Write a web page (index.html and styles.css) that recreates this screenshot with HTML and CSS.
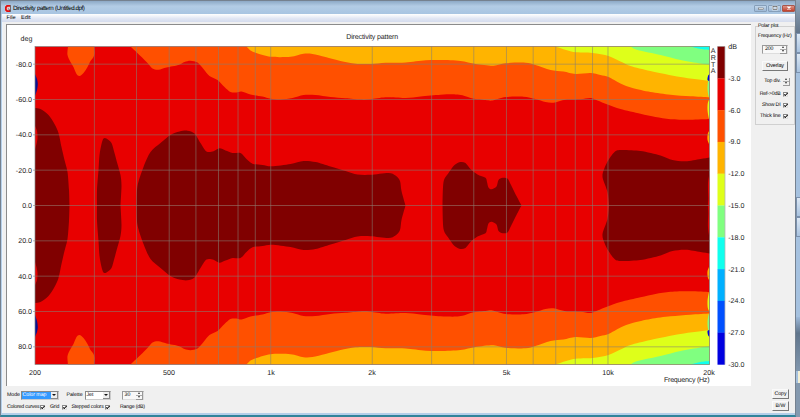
FILE: index.html
```html
<!DOCTYPE html>
<html lang="en">
<head>
    <meta charset="UTF-8">
    <title>Directivity pattern (Untitled.dpf)</title>
    <link rel="stylesheet" href="styles.css">
</head>
<body>

<div class="window">
    <div class="title-bar">
        <svg class="app-icon" viewBox="0 0 7 8">
            <rect width="7" height="8" fill="#e8c8cc"/>
            <path d="M6 0H2L0 2V6L2 8H6V6H3L2 5V3L3 2H6Z" fill="#e01010"/>
            <path d="M6.5 0V8M4 4L6 7" stroke="#333" stroke-width="0.8"/>
        </svg>
        <span class="title">Directivity pattern (Untitled.dpf)</span>
        <div class="window-buttons">
            <div class="win-btn"><svg viewBox="0 0 8 6"><rect x="1.5" y="3" width="5" height="1.6" fill="#fff" stroke="#555" stroke-width="0.5"/></svg></div>
            <div class="win-btn"><svg viewBox="0 0 8 6"><rect x="2" y="1.5" width="4" height="3" fill="none" stroke="#fff" stroke-width="1.6"/><rect x="2" y="1.5" width="4" height="3" fill="none" stroke="#555" stroke-width="0.7"/></svg></div>
            <div class="win-btn close"><svg viewBox="0 0 8 6"><path d="M2.5 1.5L5.5 4.5M5.5 1.5L2.5 4.5" stroke="#fff" stroke-width="1.3"/></svg></div>
        </div>
    </div>

    <div class="menu">
        <span>File</span>
        <span>Edit</span>
    </div>

    <div class="content">
        <div class="chart-panel">
            <svg class="chart" id="chart" viewBox="6.5 25 744 361"></svg>
        </div>

        <!-- Polar plot options -->
        <fieldset class="polar">
            <legend>Polar plot</legend>
            <div class="freq-label">Frequency (Hz)</div>
            <div class="number freq"><span>200</span><i class="spin"></i></div>
            <div class="btn overlay">Overlay</div>
            <div class="row top-div">Top div. <i class="spin"></i></div>
            <div class="row">Ref-&gt;0dB <i class="check"></i></div>
            <div class="row">Show DI <i class="check"></i></div>
            <div class="row">Thick line <i class="check"></i></div>
        </fieldset>
    </div>

    <div class="bottom">
        <div class="options">
            <div class="line">
                <span class="mode-label">Mode</span>
                <div class="select mode"><span>Color map</span><i class="arrow"></i></div>
                <span class="palette-label">Palette</span>
                <div class="select palette"><span>Jet</span><i class="arrow"></i></div>
                <div class="number range"><span>30</span><i class="spin"></i></div>
            </div>
            <div class="line checks">
                <span class="w-curves">Colored curves</span><i class="check"></i>
                <span class="w-grid">Grid</span><i class="check"></i>
                <span class="w-stepped">Stepped colors</span><i class="check"></i>
                <span class="w-range">Range (dB)</span>
            </div>
        </div>
        <div class="actions">
            <div class="btn">Copy</div>
            <div class="btn">B/W</div>
        </div>
    </div>
</div>

<div class="desktop">
    <div class="bg-dark"></div>
    <div class="bg-tabs"><b></b><b></b></div>
    <div class="bg-plain"></div>
    <div class="bg-tabs"><b></b><b></b></div>
    <div class="bg-plain second"></div>
    <div class="bg-low"></div>
    <div class="bg-icon"></div>
    <div class="bg-end"></div>
</div>

<script>
    const L = 34.5, R = 709, T = 46.5, B = 364.5, MID = 205.5;
    const colors = {
        dark: '#800000', red: '#e80000', orange: '#ff5000', amber: '#ffb400', yellow: '#deff1a',
        green: '#80ff80', cyan: '#10ffee', sky: '#00b0ff', blue: '#0050ff', navy: '#0000e0', ink: '#0a1090'
    };

    // Contours of the upper half, the lower half is mirrored
    const regions = [
        ['orange', [67.5,46.5, 67,55, 70,62, 73,67, 76,74, 79,76, 83,73, 87,67, 90,61, 93,57, 94,53, 93.5,46.5]],
        ['orange', [130,46.5, 140,56, 147,63, 152,68.5, 158,69.7, 166,67.5, 178,65, 184,62, 190,60.8, 197,62.5, 203,69, 209,76, 217,80, 224,87, 230,92, 236,92.5, 241,91.5, 250,94.5, 262,96.5, 270,98.7, 280,99.5, 292,98, 303,95, 315,95, 330,97, 345,98.2, 360,99.6, 370,99.3, 385,97.3, 405,98, 420,96.5, 440,94.7, 455,94.4, 462,95.2, 472,98.5, 485,100, 492,100.5, 505,97, 523,96.7, 535,99, 545,102, 553,102.7, 565,99.8, 580,99.3, 590,98, 597,100.5, 607,104.5, 620,109, 640,113.7, 655,117, 670,119.2, 690,119.7, 709,119], 'edge'],
        ['amber', [246,46.5, 250,50.5, 256,53, 270,56.8, 290,56.8, 303,53.8, 312,54, 325,57, 340,61, 355,63.8, 371,64, 385,62.7, 405,62.5, 425,60.3, 440,60, 460,61, 475,64, 493,65.7, 505,63.2, 525,62.7, 535,65, 550,70, 563,71.5, 575,74, 590,73, 600,75, 608,77, 620,83.5, 632,88, 650,92, 670,94.7, 690,96.3, 709,97.5], 'edge'],
        ['yellow', [555,46.5, 573,52, 592,53, 608,56, 620,61.5, 630,66, 650,71, 680,77, 709,81], 'edge'],
        ['green', [630,46.5, 637,50, 660,55, 680,60, 700,63.5, 709,64.7], 'edge'],
        ['cyan', [690,46.5, 700,49, 709,50], 'edge'],
        ['dark', [34.5,108, 40,109, 48,115, 54,124, 58,133, 61,147, 64,160, 67,172, 68.5,190, 69,205.5], 'left'],
        ['dark', [96.5,205.5, 96.5,190, 98,170, 99,155, 101,144, 103,138.5, 106,138.5, 111,143, 114,153, 117,164, 120,175, 121,186, 120,205.5]],
        ['dark', [136,205.5, 137,186, 143,167, 150,152, 160,143, 170,135, 179,131.5, 187,130.7, 194,133.5, 200,143, 206,151.5, 213,151.3, 219,148.3, 225,150.5, 232,153, 240,153, 246,159, 252,163.7, 262,165, 271,166.3, 290,164, 303,161, 315,162, 330,166.5, 345,171, 357,174.5, 370,174.8, 388,173, 395,175.5, 399.5,181, 401,191, 405,205.5]],
        ['dark', [442,205.5, 443,182, 448,173, 454,165, 460,162, 465,163, 470,169, 477,174.5, 485,177.8, 486.5,182, 488,187.5, 491,189.3, 496,186.5, 498,180, 502,177.8, 507,178.5, 510,184, 516,196, 521,205.5]],
        ['dark', [608.5,205.5, 607,192, 602,177, 604,168, 608,160, 614,152, 620,150, 640,151, 660,155.5, 672,160, 685,161.3, 700,159, 709,157.5], 'corner'],
        // thin artefacts along both edges
        ['ink', [34.5,74, 36.5,79, 37.3,84, 36.5,90, 34.5,96]],
        ['red', [34.5,126, 36.5,131, 37,138, 36,144, 34.5,149]],
        ['green', [709,78, 707.5,82, 707,89, 708,96, 709,98]],
        ['navy', [709,74, 707.5,76, 707,80, 709,81]],
        ['yellow', [709,99, 707.3,103, 707,110, 708,117, 709,120]],
        ['amber', [709,130, 707.2,134, 707,140, 709,145]],
        ['red', [709,173, 707.5,184, 707.8,198, 707.5,205.5, 709,205.5]]
    ];

    // Catmull-Rom curve through the points
    function curve(p) {
        const pts = [];
        for (let i = 0; i < p.length; i += 2) pts.push([p[i], p[i + 1]]);
        let d = `M${pts[0]}`;
        for (let i = 0; i < pts.length - 1; i++) {
            const a = pts[Math.max(i - 1, 0)], b = pts[i], c = pts[i + 1], e = pts[Math.min(i + 2, pts.length - 1)];
            d += `C${b[0] + (c[0] - a[0]) / 7},${b[1] + (c[1] - a[1]) / 7} ${c[0] - (e[0] - b[0]) / 7},${c[1] - (e[1] - b[1]) / 7} ${c}`;
        }
        return d;
    }

    const closing = { edge: `L${R},${T}`, left: `L${L},${MID}`, corner: `L${R},${MID}` };
    let half = '';
    regions.forEach(([color, pts, end]) => {
        half += `<path d="${curve(pts)}${closing[end] || ''}Z" fill="${colors[color]}"/>`;
    });

    let grid = '', text = '';
    [300, 400, 500, 600, 700, 800, 900, 1000, 2000, 3000, 4000, 5000, 6000, 7000, 8000, 9000, 10000].forEach(f => {
        grid += `M${L + (R - L) * Math.log10(f / 200) / 2},${T}V${B}`;
    });
    for (let deg = -80; deg <= 80; deg += 20) {
        const y = MID + deg * (B - T) / 180;
        grid += `M${L - 2},${y}H${R}`;
        text += `<text x="31.5" y="${y + 2.6}" text-anchor="end">${deg.toFixed(1)}</text>`;
    }
    [['200', 34.5], ['500', 168.5], ['1k', 270.5], ['2k', 371.5], ['5k', 506], ['10k', 607.5], ['20k', 708.5]].forEach(([label, x]) => {
        text += `<text x="${x}" y="374.7" text-anchor="middle">${label}</text>`;
    });

    // Color scale
    let scale = '';
    const names = ['dark', 'red', 'orange', 'amber', 'yellow', 'green', 'cyan', 'sky', 'blue', 'navy'];
    const step = (B - T) / names.length;
    names.forEach((name, i) => {
        scale += `<rect x="717" y="${T + i * step}" width="7.3" height="${step + 0.2}" fill="${colors[name]}"/>`;
        text += `<text x="727.7" y="${T + (i + 1) * step + 2.4}">-${(i + 1) * 3}.0</text>`;
    });
    ['A', 'R', 'T', 'A'].forEach((c, i) => {
        text += `<text x="712.7" y="${53 + i * 6.8}" text-anchor="middle">${c}</text>`;
    });

    document.getElementById('chart').innerHTML = `
        <rect x="${L}" y="${T}" width="${R - L}" height="${B - T}" fill="${colors.red}"/>
        <g id="half">${half}</g>
        <use href="#half" transform="translate(0 ${MID * 2}) scale(1 -1)"/>
        <path class="grid" d="${grid}"/>
        <rect class="frame" x="${L}" y="${T}" width="${R - L}" height="${B - T}"/>
        ${scale}
        <path class="scale-edge" d="M717,${T}H724.5V${B}"/>
        ${text}
        <text x="20" y="41.2">deg</text>
        <text x="727.7" y="48.8">dB</text>
        <text x="371.7" y="38.7" text-anchor="middle" textLength="52">Directivity pattern</text>
        <text x="709" y="382.3" text-anchor="end" textLength="45.5">Frequency (Hz)</text>`;
</script>

</body>
</html>
```
FILE: styles.css
```css
body {
    margin: 0;
    width: 800px;
    height: 417px;
    display: flex;
    overflow: hidden;
    font-family: "Liberation Sans", Arial, sans-serif;
    font-size: 5.5px;
    line-height: 7px;
    color: #000;
    background: #a5c1df;
    text-rendering: geometricPrecision;
}

i {
    font-style: normal;
}

.window {
    box-sizing: border-box;
    width: 796px;
    height: 417px;
    flex: none;
    display: flex;
    flex-direction: column;
    border: 1px solid #75818f;
    border-bottom: 2px solid #31849a;
    background: #b5cfe9;
    padding: 0 0 2px 1px;
}

.title-bar {
    height: 13px;
    flex: none;
    display: flex;
    align-items: center;
    margin-left: -1px;
    padding: 1px 0 0 4px;
    box-sizing: border-box;
    background: linear-gradient(#8da9c6, #b3cce5 40%, #a8c5e2);
}

.app-icon {
    width: 6px;
    height: 7px;
    margin-right: 2px;
}

.title {
    font-size: 6.2px;
    width: 400px;
    white-space: nowrap;
    letter-spacing: -0.42px;
    word-spacing: 0.4px;
}

.window-buttons {
    display: flex;
    gap: 1px;
    margin-left: auto;
}

.win-btn {
    box-sizing: border-box;
    width: 13px;
    height: 7px;
    display: flex;
    justify-content: center;
    align-items: center;
    border: 1px solid #869fba;
    border-radius: 1px;
    background: linear-gradient(#c3d7eb, #9db8d5);
}

.win-btn svg {
    width: 8px;
    height: 6px;
    flex: none;
}

.win-btn.close {
    border-color: #a8574c;
    background: linear-gradient(#dc9488, #c2402b);
}

.menu {
    height: 8px;
    flex: none;
    display: flex;
    gap: 5.5px;
    padding-left: 4.5px;
    line-height: 8px;
    background: linear-gradient(#fff, #dfe5f3 60%, #d5dced);
    font-size: 5.6px;
}

.content {
    height: 364px;
    flex: none;
    display: flex;
    box-sizing: border-box;
    padding: 2px 0 0 3px;
    border-left: 1px solid #eef4fb;
    background: #f0f0f0;
}

.chart-panel {
    box-sizing: border-box;
    width: 745px;
    height: 362px;
    flex: none;
    border-top: 1px solid #8b8b8b;
    border-left: 1px solid #8b8b8b;
    background: #fff;
}

.chart {
    display: block;
    width: 744px;
    height: 361px;
}

.chart text {
    font-size: 7.1px;
    fill: #222;
}

.grid {
    fill: none;
    stroke: #858073;
    stroke-width: 0.7;
    stroke-opacity: 0.8;
}

.frame {
    fill: none;
    stroke: #858585;
    stroke-width: 0.7;
}

.scale-edge {
    fill: none;
    stroke: #888;
    stroke-width: 0.5;
}

.polar {
    box-sizing: border-box;
    width: 40px;
    min-width: 0;
    height: 102px;
    margin: -1px 0 0 4px;
    padding: 0;
    border: 1px solid #d0d0d0;
    font-size: 5.2px;
    letter-spacing: -0.15px;
}

.polar legend {
    margin-left: 2px;
    padding: 0;
    line-height: 6px;
    white-space: nowrap;
}

.freq-label {
    padding: 4px 0 0 2px;
    white-space: nowrap;
}

.number {
    box-sizing: border-box;
    display: flex;
    align-items: center;
    justify-content: space-between;
    border: 1px solid #999;
    border-right-color: #ddd;
    border-bottom-color: #ddd;
    background: #f8f8f8;
}

.freq {
    width: 26px;
    height: 9px;
    margin: 5px 0 0 6px;
    padding-left: 2px;
}

.spin {
    width: 7px;
    height: 8px;
    flex: none;
    display: flex;
    flex-direction: column;
    justify-content: space-around;
    align-items: center;
    box-sizing: border-box;
    border-right: 1px solid #999;
    border-bottom: 1px solid #999;
    background: linear-gradient(transparent 45%, #aaa 45%, #aaa 55%, transparent 55%);
}

.spin::before,
.spin::after {
    content: "";
    border: 1.5px solid transparent;
    border-top: 0;
    border-bottom: 2px solid #333;
}

.spin::after {
    border-bottom: 0;
    border-top: 2px solid #333;
}

.btn {
    box-sizing: border-box;
    text-align: center;
    border: 1px solid #fafafa;
    border-right-color: #777;
    border-bottom-color: #777;
    background: #f0f0f0;
}

.overlay {
    width: 26px;
    height: 10px;
    margin: 6.5px 0 0 6px;
    line-height: 8px;
    font-size: 5.5px;
}

.row {
    display: flex;
    justify-content: flex-end;
    align-items: center;
    gap: 2.5px;
    height: 11.2px;
    padding-right: 6px;
    white-space: nowrap;
}

.top-div {
    height: 14px;
    margin-top: 4px;
    padding-right: 4px;
}

.check {
    box-sizing: border-box;
    width: 5px;
    height: 5px;
    flex: none;
    border: 1px solid #888;
    border-right-color: #ddd;
    border-bottom-color: #ddd;
    background: #fff;
    position: relative;
}

/* tick mark */
.check::after {
    content: "";
    position: absolute;
    left: 0;
    top: 0;
    width: 4px;
    height: 2px;
    border-left: 1px solid #111;
    border-bottom: 1px solid #111;
    box-sizing: border-box;
    transform: rotate(-45deg);
}

.bottom {
    flex: 1;
    display: flex;
    justify-content: space-between;
    border-left: 1px solid #eef4fb;
    background: #f0f0f0;
    font-size: 5.2px;
    white-space: nowrap;
}

.options {
    padding: 5px 0 0 4px;
}

.line {
    display: flex;
    align-items: center;
    height: 9px;
}

.line > span {
    flex: none;
}

.mode-label {
    width: 13.5px;
}

.palette-label {
    width: 18px;
    margin-left: 8px;
}

.select {
    box-sizing: border-box;
    display: flex;
    justify-content: space-between;
    height: 9px;
    border: 1px solid #888;
    border-right-color: #ccc;
    border-bottom-color: #ccc;
    background: #fff;
}

.select span {
    flex: 1;
    padding-left: 1px;
}

.mode {
    width: 38px;
}

.mode span {
    background: #3399ff;
    color: #fff;
}

.palette {
    width: 26px;
}

.arrow {
    width: 7px;
    display: flex;
    align-items: center;
    justify-content: center;
    box-sizing: border-box;
    border-right: 1px solid #888;
    border-bottom: 1px solid #888;
    background: #eee;
}

.arrow::after {
    content: "";
    border: 2px solid transparent;
    border-top: 2.5px solid #111;
    border-bottom: 0;
}

.range {
    width: 22px;
    height: 9px;
    margin-left: 11px;
    padding-left: 2px;
}

.checks {
    margin-top: 3px;
    height: 8px;
    letter-spacing: -0.18px;
}

.w-curves {
    width: 33px;
}

.w-grid {
    width: 12px;
    margin-left: 5px;
}

.w-stepped {
    width: 33px;
    margin-left: 4.5px;
}

.w-range {
    margin-left: 10.5px;
}

.actions {
    display: flex;
    flex-direction: column;
    gap: 2px;
    padding: 3px 6px 0 0;
}

.actions .btn {
    width: 17px;
    height: 10px;
    line-height: 8px;
}

.desktop {
    flex: 1;
    display: flex;
    flex-direction: column;
    background: #a5c1df;
}

.bg-dark {
    height: 33px;
    background: linear-gradient(#93a9bf, #63758a);
}

.bg-tabs {
    height: 40px;
    display: flex;
    flex-direction: column;
}

.bg-tabs b {
    flex: 1;
    border: 1px solid #7b91ad;
    border-right: 0;
    background: linear-gradient(#dde8f4, #a8c2df);
}

.bg-plain {
    height: 124px;
}

.bg-plain.second {
    height: 80px;
}

.bg-low {
    height: 54px;
    background: linear-gradient(#9db9d9, #60758c 30%, #8096ad);
}

.bg-icon {
    height: 12px;
    margin-left: 2px;
    background: #f3efd5;
}

.bg-end {
    flex: 1;
    background: #8499af;
}
```
